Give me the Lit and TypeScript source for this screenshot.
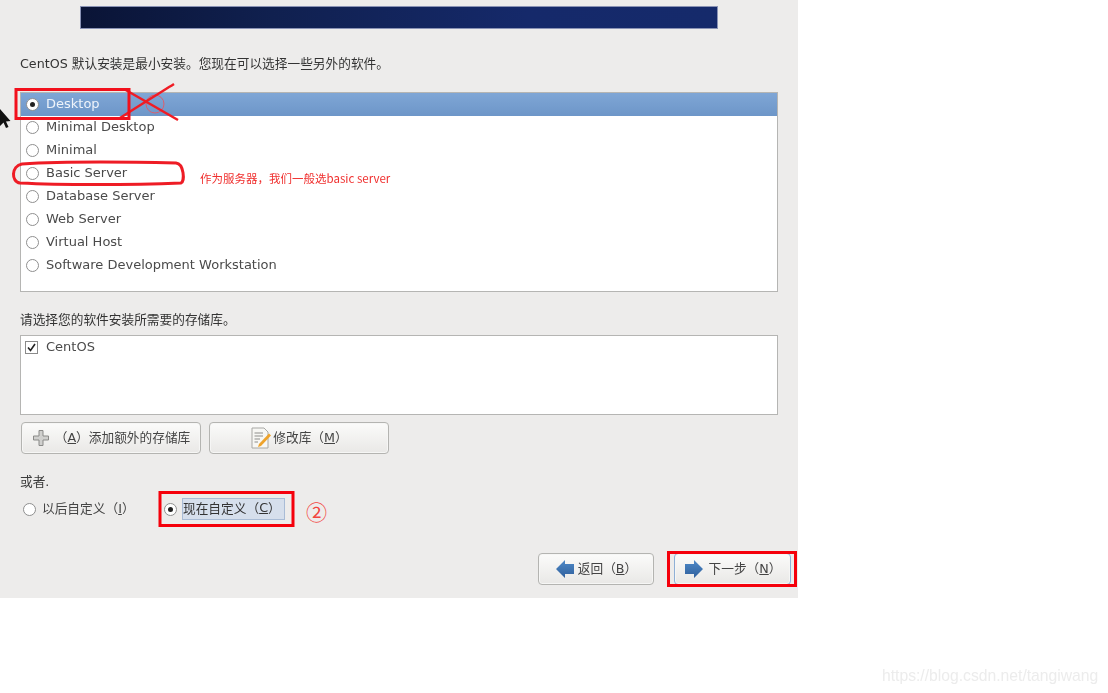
import { LitElement, html, css, svg } from "lit";
import { customElement } from "lit/decorators.js";

const OPTIONS = ["Desktop", "Minimal Desktop", "Minimal", "Basic Server", "Database Server", "Web Server", "Virtual Host", "Software Development Workstation"];

@customElement("app-root")
export class AppRoot extends LitElement {
  static styles = css`
    :host { display: block; position: relative; width: 1108px; height: 693px; background: #fff; overflow: hidden;
      font-family: "DejaVu Sans", "Noto Sans CJK SC", sans-serif; color: #3a3a3a; font-size: 13px; }
    .panel { width: 798px; height: 598px; background: #edeceb; box-sizing: border-box; padding: 6px 20px 0; display: flex; flex-direction: column; filter: blur(0.5px); }
    .banner { align-self: center; width: 638px; height: 23px; box-sizing: border-box; border: 1px solid #8a93b5; background: linear-gradient(90deg, #0a1436 0%, #10204f 30%, #15296a 70%, #152a6b 100%); }
    .intro { margin-top: 26px; height: 18px; line-height: 18px; font-size: 12.7px; color: #333; white-space: nowrap; }
    .list { margin-top: 19px; width: 758px; height: 200px; box-sizing: border-box; background: #fff; border: 1px solid #b5b5b3; }
    .row { height: 23px; box-sizing: border-box; padding: 0 0 2px 5px; display: flex; align-items: center; gap: 7px; color: #4a4a4a; }
    .row.sel { background: linear-gradient(180deg, #7fa6d6 0%, #6d96c8 100%); color: #eef3fa; }
    .radio { width: 11px; height: 11px; border-radius: 50%; border: 1px solid #8f8f8f; background: #fff; flex: none; display: flex; align-items: center; justify-content: center; }
    .row .radio { margin-top: 2px; }
    .radio.on::after { content: ""; width: 5px; height: 5px; border-radius: 50%; background: #222; }
    .label2 { margin-top: 19px; height: 18px; line-height: 18px; font-size: 12.7px; color: #333; }
    .repo { margin-top: 6px; width: 758px; height: 80px; box-sizing: border-box; background: #fff; border: 1px solid #b5b5b3; }
    .repo .row { padding-left: 4px; gap: 8px; }
    .check { width: 11px; height: 11px; border: 1px solid #8a8a8a; background: #fff; flex: none; display: flex; margin-top: 2px; }
    .repo-btns { display: flex; gap: 8px; margin-top: 7px; padding-left: 1px; }
    .btn { box-sizing: border-box; height: 32px; border: 1px solid #b4b4b1; border-radius: 4px; box-shadow: inset 0 0 0 1px #f6f6f5; background: linear-gradient(180deg, #fbfbfa 0%, #e9e8e6 100%); display: flex; align-items: center; justify-content: center; font-size: 12.7px; color: #444; white-space: nowrap; }
    .btn span { padding-bottom: 3px; }
    .btn u { text-underline-offset: 1px; }
    .b1 { width: 180px; gap: 5px; }
    .b2 { width: 180px; gap: 1px; }
    .or { margin-top: 19px; height: 18px; line-height: 18px; font-size: 12.7px; }
    .choose { display: flex; align-items: center; margin-top: 5px; height: 26px; padding-left: 3px; font-size: 12.7px; color: #444; }
    .choose .radio { margin-right: 6px; }
    .later { width: 141px; white-space: nowrap; display: flex; align-items: center; }
    .later span:last-child { padding-bottom: 3px; }
    .now { height: 22px; width: 103px; box-sizing: border-box; border: 1px solid #a9bcd6; padding-bottom: 3px; background: #d6dfec; display: flex; align-items: center; color: #333; white-space: nowrap; margin-left: -1px; }
    .nav { display: flex; justify-content: flex-end; gap: 20px; margin-top: 31px; margin-right: -13px; }
    .nb { height: 32px; width: 116px; gap: 3px; }
    .nb.next { width: 117px; border-color: #8fb0d6; gap: 5px; }
    .overlay { position: absolute; inset: 0; pointer-events: none; }
    .note { position: absolute; left: 200px; top: 170px; font-family: "Noto Sans CJK SC", sans-serif; font-size: 11.5px; line-height: 16px; color: #f0302f; white-space: nowrap; filter: blur(0.3px); }
    .circled { position: absolute; left: 306px; top: 498px; font-family: "Noto Sans CJK SC", sans-serif; font-size: 21px; line-height: 26px; color: #f2453f; }
    .wm { position: absolute; left: 882px; top: 666px; font-family: "Liberation Sans", sans-serif; font-size: 15.7px; line-height: 20px; color: #ececec; white-space: nowrap; filter: blur(0.4px); }
  `;

  private arrowDefs() {
    return svg`<defs><linearGradient id="ag" x1="0" y1="0" x2="0" y2="1"><stop offset="0" stop-color="#4f8ac8"/><stop offset="1" stop-color="#2f5f9c"/></linearGradient></defs>`;
  }
  private leftArrow() {
    return svg`<svg width="20" height="20" viewBox="0 0 20 20">${this.arrowDefs()}<path d="M1 10 L10 1 V5 H19 V15 H10 V19 Z" fill="url(#ag)"/></svg>`;
  }
  private rightArrow() {
    return svg`<svg width="20" height="20" viewBox="0 0 20 20">${this.arrowDefs()}<path d="M19 10 L10 1 V5 H1 V15 H10 V19 Z" fill="url(#ag)"/></svg>`;
  }

  render() {
    return html`
      <div class="panel">
        <div class="banner"></div>
        <div class="intro">CentOS 默认安装是最小安装。您现在可以选择一些另外的软件。</div>
        <div class="list">
          ${OPTIONS.map((o, i) => html`<div class="row ${i === 0 ? "sel" : ""}"><span class="radio ${i === 0 ? "on" : ""}"></span><span>${o}</span></div>`)}
        </div>
        <div class="label2">请选择您的软件安装所需要的存储库。</div>
        <div class="repo">
          <div class="row"><span class="check"><svg width="11" height="11" viewBox="0 0 11 11"><path d="M2 5.500 L4.500 8.500 L9 2" fill="none" stroke="#222" stroke-width="1.6"/></svg></span><span>CentOS</span></div>
        </div>
        <div class="repo-btns">
          <div class="btn b1">
            <svg width="18" height="18" viewBox="0 0 18 18"><path d="M7 1.500 H11 V7 H16.500 V11 H11 V16.500 H7 V11 H1.500 V7 H7 Z" fill="#d0d0ce" stroke="#8a8a88" stroke-width="1"/></svg>
            <span>（<u>A</u>）添加额外的存储库</span>
          </div>
          <div class="btn b2">
            <svg width="22" height="24" viewBox="0 0 22 24"><path d="M2 2 H14 L18 6 V22 H2 Z" fill="#f7f7f4" stroke="#a8a8a4"/><path d="M4.500 7 H13 M4.500 10 H13 M4.500 13 H10 M4.500 16 H8" stroke="#8d8d8a"/><path d="M9 18 L19 7.500 L21 9.500 L11 20 L8 21 Z" fill="#eea32b"/></svg>
            <span>修改库（<u>M</u>）</span>
          </div>
        </div>
        <div class="or">或者.</div>
        <div class="choose">
          <div class="later"><span class="radio"></span><span>以后自定义（<u>I</u>）</span></div>
          <span class="radio on"></span>
          <div class="now">现在自定义（<u>C</u>）</div>
        </div>
        <div class="nav">
          <div class="btn nb">${this.leftArrow()}<span>返回（<u>B</u>）</span></div>
          <div class="btn nb next">${this.rightArrow()}<span>下一步（<u>N</u>）</span></div>
        </div>
      </div>
      <svg class="overlay" width="1108" height="693" viewBox="0 0 1108 693" fill="none">
        <circle cx="155" cy="104" r="9" stroke="#d9606f" stroke-width="1"/>
        <path d="M120 118 C140 105 158 94 174 84" stroke="#f01c24" stroke-width="2.500"/>
        <path d="M124 89 C145 101 162 111 178 120" stroke="#f01c24" stroke-width="2.500"/>
        <rect x="16" y="89.500" width="113" height="29" stroke="#f2101c" stroke-width="3"/>
        <path d="M22 164 C70 161 130 162 176 163 C184 164 185 181 181 183 C130 185 60 185 20 183 C11 182 11 166 22 164 Z" stroke="#ee1c25" stroke-width="3"/>
        <rect x="160" y="492.500" width="133" height="33" stroke="#f5000b" stroke-width="3"/>
        <rect x="668.500" y="552.500" width="127" height="33" stroke="#f5000b" stroke-width="3"/>
      </svg>
      <div class="note">作为服务器，我们一般选basic server</div>
      <div class="circled">②</div>
      <svg class="overlay" width="1108" height="693" viewBox="0 0 1108 693"><path d="M0 109 V126 L3.500 122.500 L6 128 L8.500 127 L6 121.500 L10.500 121 Z" fill="#111"/></svg>
      <div class="wm">https://blog.csdn.net/tangiwang</div>
    `;
  }
}
